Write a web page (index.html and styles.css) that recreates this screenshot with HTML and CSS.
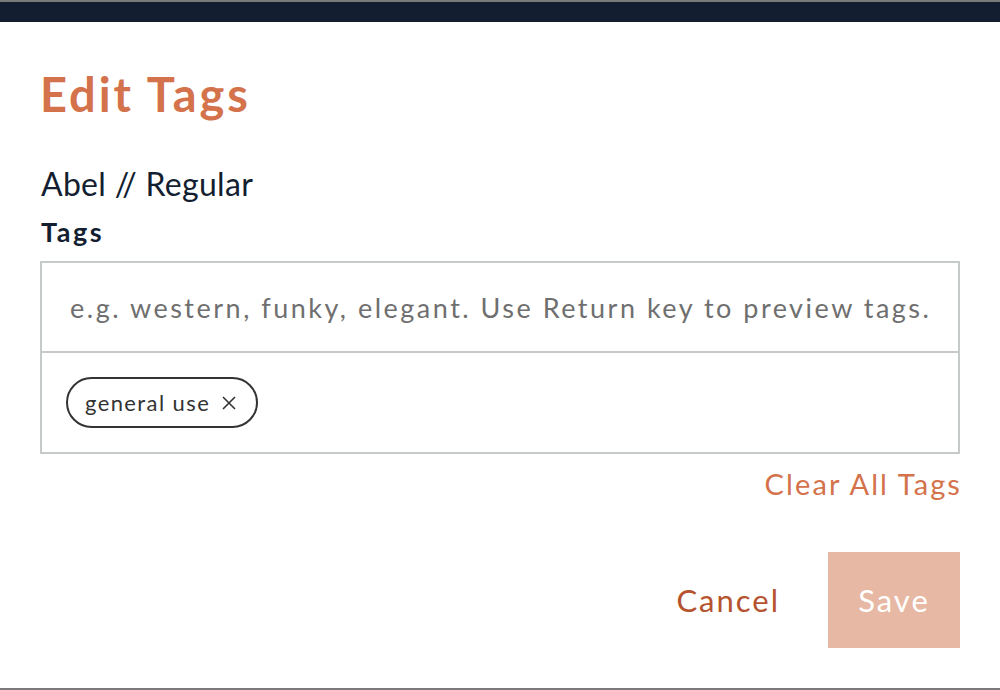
FILE: index.html
```html
<!DOCTYPE html>
<html lang="en">
<head>
    <meta charset="UTF-8">
    <meta name="viewport" content="width=device-width, initial-scale=1.0">
    <title>Edit Tags</title>
    <link rel="stylesheet" href="styles.css">
</head>
<body>
    <div class="top-strip"></div>
    <div class="nav-bar"></div>

    <div class="modal">
        <h1 class="modal-title">Edit Tags</h1>
        <p class="font-name">Abel // Regular</p>

        <label class="field-label" for="tag_input">Tags</label>
        <div class="tag-box">
            <input class="tag-input" type="text" id="tag_input" placeholder="e.g. western, funky, elegant. Use Return key to preview tags.">
            <div class="tag-list">
                <span class="tag-chip">general use
                    <svg class="tag-remove" width="14" height="14" viewBox="0 0 14 14"><path d="M1 1L13 13M13 1L1 13" stroke="#333" stroke-width="1.6" fill="none"/></svg>
                </span>
            </div>
        </div>

        <div class="clear-row">
            <a class="clear-link" href="#">Clear All Tags</a>
        </div>

        <div class="actions">
            <button type="button" class="btn-cancel">Cancel</button>
            <button type="button" class="btn-save">Save</button>
        </div>
    </div>
</body>
</html>
```

FILE: styles.css
```css
/* page background (dimmed overlay behind the modal) */
body {
    margin: 0;
    background: #7a7a7a;
    font-family: Lato, "Open Sans", Arial, sans-serif;
    color: #131e30;
}

.top-strip {
    height: 2px;
}

.nav-bar {
    height: 20px;
    background: #131e30;
}

/* white dialog */
.modal {
    height: 666px;
    box-sizing: border-box;
    background: #fff;
    padding: 44px 40px 0 40px;
}

.modal-title {
    margin: 0;
    font-size: 47px;
    font-weight: 700;
    line-height: 1.2;
    letter-spacing: 2.9px;
    color: #d4724b;
}

.font-name {
    margin: 43px 0 0 1px;
    font-size: 32px;
    line-height: 1.2;
    letter-spacing: 0.3px;
}

.field-label {
    display: block;
    margin: 12px 0 0 1px;
    font-size: 27px;
    font-weight: 700;
    line-height: 1.2;
    letter-spacing: 2.5px;
}

/* tag input + tag list box */
.tag-box {
    margin-top: 13px;
    border: 2px solid #c6caca;
}

.tag-input {
    display: block;
    width: 100%;
    height: 90px;
    box-sizing: border-box;
    border: none;
    border-bottom: 2px solid #c6caca;
    padding: 0 28px;
    font-family: inherit;
    font-size: 27px;
    letter-spacing: 2.5px;
    outline: none;
}

.tag-input::placeholder {
    color: #6f6f6f;
}

.tag-list {
    display: flex;
    padding: 24px;
}

.tag-chip {
    display: flex;
    align-items: center;
    gap: 12px;
    height: 51px;
    box-sizing: border-box;
    padding: 0 20px 0 17px;
    border: 2px solid #333;
    border-radius: 26px;
    font-size: 22px;
    letter-spacing: 1.4px;
    color: #333;
}

.tag-remove {
    display: block;
}

.clear-row {
    display: flex;
    justify-content: flex-end;
    margin-top: 13px;
}

.clear-link {
    font-size: 29px;
    line-height: 1.2;
    letter-spacing: 2.1px;
    margin-right: -2px;
    color: #d4724b;
    text-decoration: none;
}

/* dialog buttons */
.actions {
    display: flex;
    justify-content: flex-end;
    align-items: center;
    gap: 48px;
    margin-top: 50px;
}

.actions button {
    font-family: inherit;
    font-size: 31px;
    letter-spacing: 2px;
    border: none;
    cursor: pointer;
}

.btn-cancel {
    background: none;
    color: #b5532e;
    padding: 0;
}

.btn-save {
    width: 132px;
    height: 96px;
    background: #e7b8a4;
    color: #fff;
}
```
